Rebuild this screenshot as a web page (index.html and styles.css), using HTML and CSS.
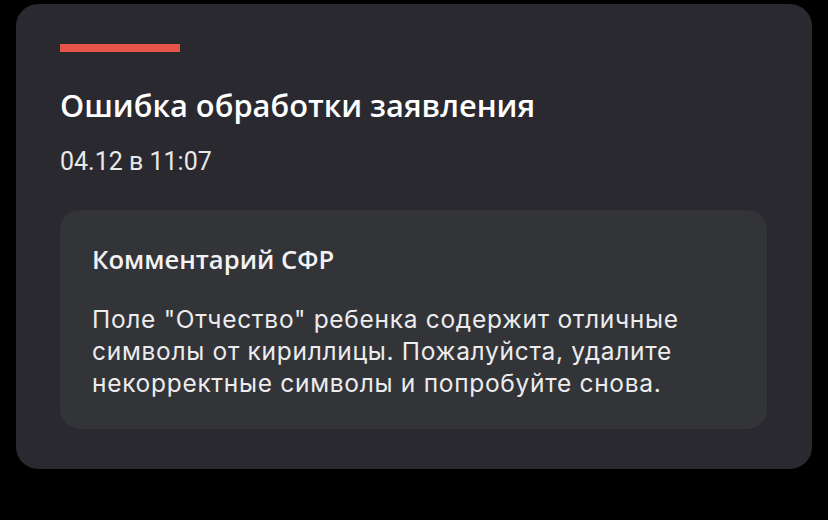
FILE: index.html
```html
<!DOCTYPE html>
<html lang="ru">
<head>
<meta charset="utf-8">
<link rel="stylesheet" href="styles.css">
</head>
<body>
<div class="card">
  <div class="bar"></div>
  <h1 class="title">Ошибка обработки заявления</h1>
  <div class="date">04.12 в 11:07</div>
  <div class="comment">
    <div class="comment-title">Комментарий СФР</div>
    <p class="comment-text">Поле "Отчество" ребенка содержит отличные символы от кириллицы. Пожалуйста, удалите некорректные символы и попробуйте снова.</p>
  </div>
</div>
</body>
</html>
```
FILE: styles.css
```css
html, body {
  margin: 0;
  padding: 0;
  background: #000;
}
body {
  width: 828px;
  height: 520px;
  overflow: hidden;
}
.card {
  margin: 4px 0 0 16px;
  width: 796px;
  height: 465px;
  box-sizing: border-box;
  background: #29292f;
  border-radius: 22px;
  padding: 40px 44px 0 44px;
}
.bar {
  width: 120px;
  height: 8px;
  background: #e8544a;
}
.title {
  margin: 33px 0 0 0;
  font-family: "Open Sans", sans-serif;
  font-weight: 600;
  font-size: 30.8px;
  line-height: 40px;
  color: #fff;
}
.date {
  margin-top: 22px;
  font-family: Roboto, sans-serif;
  font-size: 25px;
  line-height: 30px;
  color: #e8e8ea;
}
.comment {
  margin-top: 33px;
  width: 707px;
  height: 219px;
  box-sizing: border-box;
  background: #333438;
  border-radius: 20px;
  padding: 34px 32px 0 32px;
}
.comment-title {
  font-family: "Open Sans", sans-serif;
  font-weight: 600;
  font-size: 25.6px;
  line-height: 32px;
  color: #f2f2f4;
}
.comment-text {
  margin: 27px 0 0 0;
  font-family: Inter, sans-serif;
  font-size: 24.5px;
  letter-spacing: 0.7px;
  line-height: 32px;
  color: #ececee;
}
```
